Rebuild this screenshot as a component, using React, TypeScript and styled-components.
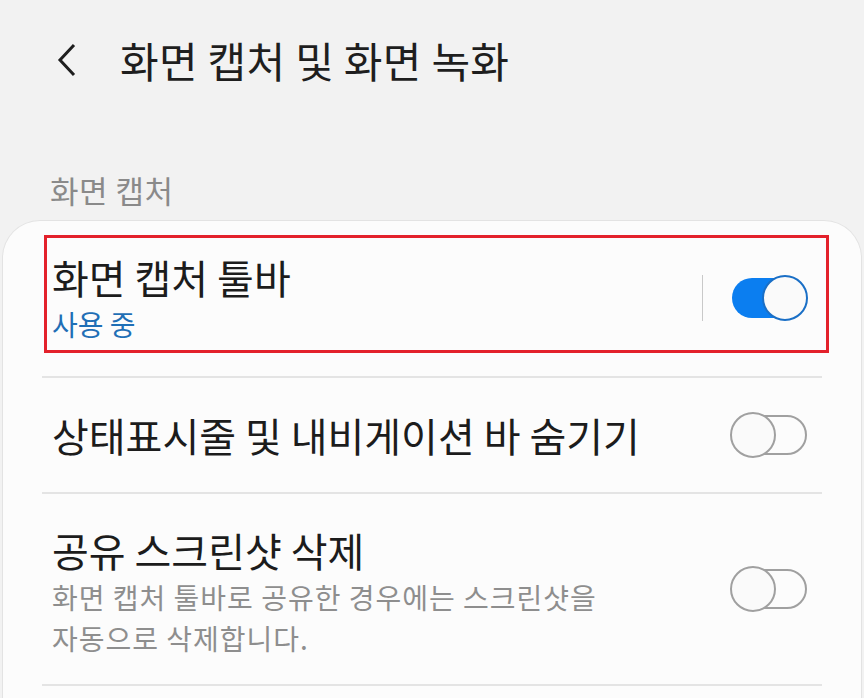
import React from 'react';
import styled, { createGlobalStyle } from 'styled-components';

const GlobalStyle = createGlobalStyle`
  html, body {
    margin: 0;
    padding: 0;
    background: #f2f2f2;
    overflow: hidden;
  }
  body {
    font-family: 'Noto Sans CJK KR', 'Noto Sans', sans-serif;
    color: #1c1c1c;
  }
`;

const Page = styled.div`
  width: 864px;
  height: 698px;
  display: flex;
  flex-direction: column;
  background: #f2f2f2;
`;

const Header = styled.header`
  height: 120px;
  display: flex;
  align-items: flex-start;
  padding: 36px 0 0 52px;
  box-sizing: border-box;
`;

const BackButton = styled.button`
  width: 30px;
  height: 48px;
  border: 0;
  padding: 0;
  background: none;
  display: flex;
  align-items: center;
  justify-content: center;
  margin-right: 38px;
`;

const Title = styled.h1`
  margin: 0;
  font-size: 42px;
  line-height: 48px;
  font-weight: 400;
  letter-spacing: 0.3px;
  color: #1e1e1e;
`;

const SectionLabel = styled.div`
  padding: 50px 0 0 50px;
  font-size: 31px;
  line-height: 40px;
  letter-spacing: 0.5px;
  color: #8a8a8a;
  height: 100px;
  box-sizing: border-box;
`;

const Card = styled.section`
  flex: 1;
  margin: 0 2px;
  padding: 14px 39px 0 39px;
  background: #fcfcfc;
  border: 1px solid #e3e3e3;
  border-bottom: 0;
  border-radius: 38px 38px 0 0;
`;

const Row = styled.div<{ $height: number; $highlight?: boolean }>`
  display: flex;
  align-items: center;
  box-sizing: border-box;
  height: ${p => p.$height}px;
  padding: 0 14px 0 10px;
  ${p =>
    p.$highlight &&
    `
    margin: 0 -7px 0 2px;
    padding: 8px 18px 0 5px;
    border: 3px solid #e3212b;
  `}
`;

const Separator = styled.hr<{ $gap?: number }>`
  margin: ${p => p.$gap || 0}px 0 0;
  border: 0;
  height: 2px;
  background: #e4e4e4;
`;

const TextBlock = styled.div<{ $shift?: number }>`
  flex: 1;
  display: flex;
  flex-direction: column;
  padding-top: ${p => p.$shift || 0}px;
`;

const RowTitle = styled.div`
  font-size: 40px;
  line-height: 50px;
  color: #1c1c1c;
`;

const RowStatus = styled.div`
  font-size: 28px;
  line-height: 40px;
  color: #1f6fb6;
  margin-top: 2px;
`;

const RowDesc = styled.div`
  font-size: 28px;
  line-height: 41px;
  letter-spacing: 1px;
  color: #8e8e8e;
  margin-top: 2px;
`;

const VDivider = styled.div`
  width: 1.5px;
  height: 46px;
  background: #c9c9c9;
  margin-right: 27px;
`;

const Track = styled.div<{ $on: boolean }>`
  position: relative;
  width: 78px;
  height: 46px;
  flex-shrink: 0;
  &::before {
    content: '';
    position: absolute;
    left: 2px;
    right: 1px;
    top: 3px;
    bottom: 3px;
    border-radius: 20px;
    box-sizing: border-box;
    background: ${p => (p.$on ? '#0b7ef0' : 'transparent')};
    border: ${p => (p.$on ? '0' : '2.5px solid #a0a0a0')};
  }
`;

const Knob = styled.div<{ $on: boolean }>`
  position: absolute;
  top: 0;
  ${p => (p.$on ? 'right: 0;' : 'left: 0;')}
  width: 46px;
  height: 46px;
  box-sizing: border-box;
  border-radius: 50%;
  background: #fafafa;
  border: 2.5px solid ${p => (p.$on ? '#1a6fc6' : '#a0a0a0')};
`;

const Switch = ({ on }: { on: boolean }) => (
  <Track $on={on}>
    <Knob $on={on} />
  </Track>
);

const BackIcon = () => (
  <svg width="24" height="36" viewBox="0 0 24 36">
    <path d="M19 3 L5 18 L19 33" fill="none" stroke="#1e1e1e" strokeWidth="3" strokeLinejoin="miter" />
  </svg>
);

export default function App() {
  return (
    <Page>
      <GlobalStyle />
      <Header>
        <BackButton aria-label="뒤로">
          <BackIcon />
        </BackButton>
        <Title>화면 캡처 및 화면 녹화</Title>
      </Header>
      <SectionLabel>화면 캡처</SectionLabel>
      <Card>
        <Row $height={118} $highlight>
          <TextBlock>
            <RowTitle>화면 캡처 툴바</RowTitle>
            <RowStatus>사용 중</RowStatus>
          </TextBlock>
          <VDivider />
          <Switch on />
        </Row>
        <Separator $gap={23} />
        <Row $height={114}>
          <TextBlock>
            <RowTitle>상태표시줄 및 내비게이션 바 숨기기</RowTitle>
          </TextBlock>
          <Switch on={false} />
        </Row>
        <Separator />
        <Row $height={190}>
          <TextBlock $shift={6}>
            <RowTitle>공유 스크린샷 삭제</RowTitle>
            <RowDesc>
              화면 캡처 툴바로 공유한 경우에는 스크린샷을
              <br />
              자동으로 삭제합니다.
            </RowDesc>
          </TextBlock>
          <Switch on={false} />
        </Row>
        <Separator />
      </Card>
    </Page>
  );
}
